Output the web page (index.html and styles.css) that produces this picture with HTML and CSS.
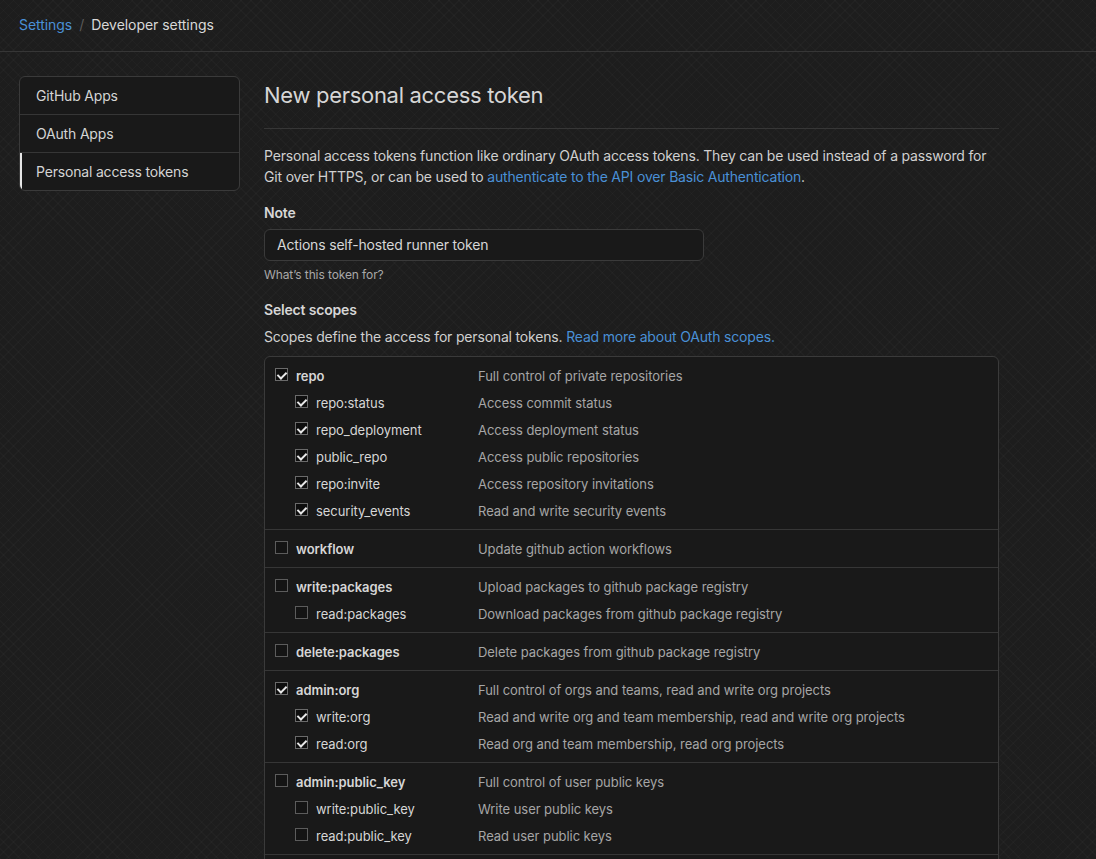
FILE: index.html
```html
<!DOCTYPE html>
<html>
<head>
<meta charset="utf-8">
<link rel="stylesheet" href="styles.css">
</head>
<body>
<header class="topbar">
  <nav class="crumbs"><a class="link" href="#">Settings</a><span class="sep">/</span><span class="current">Developer settings</span></nav>
</header>
<div class="layout">
  <aside class="menu">
    <a class="menu-item" href="#">GitHub Apps</a>
    <a class="menu-item" href="#">OAuth Apps</a>
    <a class="menu-item active" href="#">Personal access tokens</a>
  </aside>
  <main class="main">
    <h1 class="title">New personal access token</h1>
    <p class="intro">Personal access tokens function like ordinary OAuth access tokens. They can be used instead of a password for Git over HTTPS, or can be used to <a class="link" href="#">authenticate to the API over Basic Authentication</a>.</p>
    <div class="field">
      <label class="label">Note</label>
      <div class="input">Actions self-hosted runner token</div>
      <p class="hint">What’s this token for?</p>
    </div>
    <div class="field">
      <div class="label">Select scopes</div>
      <p class="scopes-intro">Scopes define the access for personal tokens. <a class="link" href="#">Read more about OAuth scopes.</a></p>
    </div>
    <div class="scopes">
      <div class="group">
        <div class="row top"><span class="cb on"></span><span class="name">repo</span><span class="desc">Full control of private repositories</span></div>
        <div class="row sub"><span class="cb on"></span><span class="name">repo:status</span><span class="desc">Access commit status</span></div>
        <div class="row sub"><span class="cb on"></span><span class="name">repo_deployment</span><span class="desc">Access deployment status</span></div>
        <div class="row sub"><span class="cb on"></span><span class="name">public_repo</span><span class="desc">Access public repositories</span></div>
        <div class="row sub"><span class="cb on"></span><span class="name">repo:invite</span><span class="desc">Access repository invitations</span></div>
        <div class="row sub"><span class="cb on"></span><span class="name">security_events</span><span class="desc">Read and write security events</span></div>
      </div>
      <div class="group">
        <div class="row top"><span class="cb"></span><span class="name">workflow</span><span class="desc">Update github action workflows</span></div>
      </div>
      <div class="group">
        <div class="row top"><span class="cb"></span><span class="name">write:packages</span><span class="desc">Upload packages to github package registry</span></div>
        <div class="row sub"><span class="cb"></span><span class="name">read:packages</span><span class="desc">Download packages from github package registry</span></div>
      </div>
      <div class="group">
        <div class="row top"><span class="cb"></span><span class="name">delete:packages</span><span class="desc">Delete packages from github package registry</span></div>
      </div>
      <div class="group">
        <div class="row top"><span class="cb on"></span><span class="name">admin:org</span><span class="desc">Full control of orgs and teams, read and write org projects</span></div>
        <div class="row sub"><span class="cb on"></span><span class="name">write:org</span><span class="desc">Read and write org and team membership, read and write org projects</span></div>
        <div class="row sub"><span class="cb on"></span><span class="name">read:org</span><span class="desc">Read org and team membership, read org projects</span></div>
      </div>
      <div class="group">
        <div class="row top"><span class="cb"></span><span class="name">admin:public_key</span><span class="desc">Full control of user public keys</span></div>
        <div class="row sub"><span class="cb"></span><span class="name">write:public_key</span><span class="desc">Write user public keys</span></div>
        <div class="row sub"><span class="cb"></span><span class="name">read:public_key</span><span class="desc">Read user public keys</span></div>
      </div>
      <div class="group more"></div>
    </div>
  </main>
</div>
</body>
</html>
```
FILE: styles.css
```css
* { box-sizing: border-box; }
html, body { margin: 0; padding: 0; }
body {
  background-color: #1d1d1d;
  background-image:
    repeating-linear-gradient(45deg, rgba(255,255,255,0.02) 0 1px, transparent 1px 7px),
    repeating-linear-gradient(-45deg, rgba(255,255,255,0.02) 0 1px, transparent 1px 7px);
  color: #d4d4d4;
  font-family: Inter, "Liberation Sans", sans-serif;
  font-size: 14px;
  line-height: 21px;
  letter-spacing: -0.18px;
  height: 859px;
  overflow: hidden;
}
a { text-decoration: none; }
.link { color: #4a90d6; }
.topbar {
  height: 52px;
  border-bottom: 1px solid #363636;
  padding: 14px 19px 0;
}
.crumbs { font-size: 14px; line-height: 21px; letter-spacing: -0.05px; }
.sep { color: #5a5a5a; margin: 0 7px; }
.current { color: #d8d8d8; }
.layout {
  display: flex;
  padding: 24px 19px 0;
  gap: 24px;
}
.menu {
  width: 221px;
  flex: none;
  align-self: flex-start;
  border: 1px solid #3a3a3a;
  border-radius: 6px;
  background: #191919;
  overflow: hidden;
  display: flex;
  flex-direction: column;
}
.menu-item {
  height: 38px;
  line-height: 37px;
  padding-left: 16px;
  color: #d4d4d4;
  border-top: 1px solid #363636;
}
.menu-item:first-child { border-top: none; height: 37px; }
.menu-item.active { box-shadow: inset 2px 0 0 #e6e6e6; }
.main { width: 735px; flex: none; }
.title {
  margin: 4px 0 0;
  font-size: 22px;
  font-weight: 400;
  letter-spacing: -0.3px;
  line-height: 30px;
  color: #d6d6d6;
  padding-bottom: 18px;
  border-bottom: 1px solid #363636;
}
.intro { margin: 16px 0 0; color: #d0d0d0; }
.field { margin-top: 15px; }
.label { display: block; font-weight: 600; color: #d6d6d6; margin-bottom: 6px; }
.input {
  width: 440px;
  height: 32px;
  border: 1px solid #3a3a3a;
  border-radius: 6px;
  background: #191919;
  padding: 4px 12px;
  line-height: 22px;
  color: #d6d6d6;
}
.hint { margin: 5px 0 0; font-size: 12px; line-height: 18px; color: #a8a8a8; letter-spacing: -0.1px; }
.scopes-intro { margin: 0; color: #d0d0d0; }
.scopes {
  margin-top: 9px;
  border: 1px solid #3a3a3a;
  border-radius: 6px 6px 0 0;
  background: #191919;
  font-size: 13px;
  letter-spacing: -0.05px;
}
.group { padding: 6px 0 4px; border-top: 1px solid #363636; }
.group:first-child { border-top: none; }
.group.more { height: 20px; }
.row { display: flex; align-items: center; height: 27px; }
.row.top { padding-left: 10px; }
.row.sub { padding-left: 30px; }
.cb {
  width: 13px; height: 13px;
  border: 1px solid #5c5c5c;
  background: #141414;
  margin-right: 8px;
  margin-top: -5px;
  flex: none;
  position: relative;
}
.cb.on { border-color: #6a6a6a; background: #0e0e0e; }
.cb.on::after {
  content: "";
  position: absolute;
  left: 3px; top: 1px;
  width: 4px; height: 7px;
  border: solid #e8e8e8;
  border-width: 0 2px 2px 0;
  transform: rotate(45deg);
}
.name { color: #d6d6d6; }
.row.top .name { font-weight: 600; width: 182px; }
.row.sub .name { width: 162px; }
.desc { color: #a6a6a6; }
```
